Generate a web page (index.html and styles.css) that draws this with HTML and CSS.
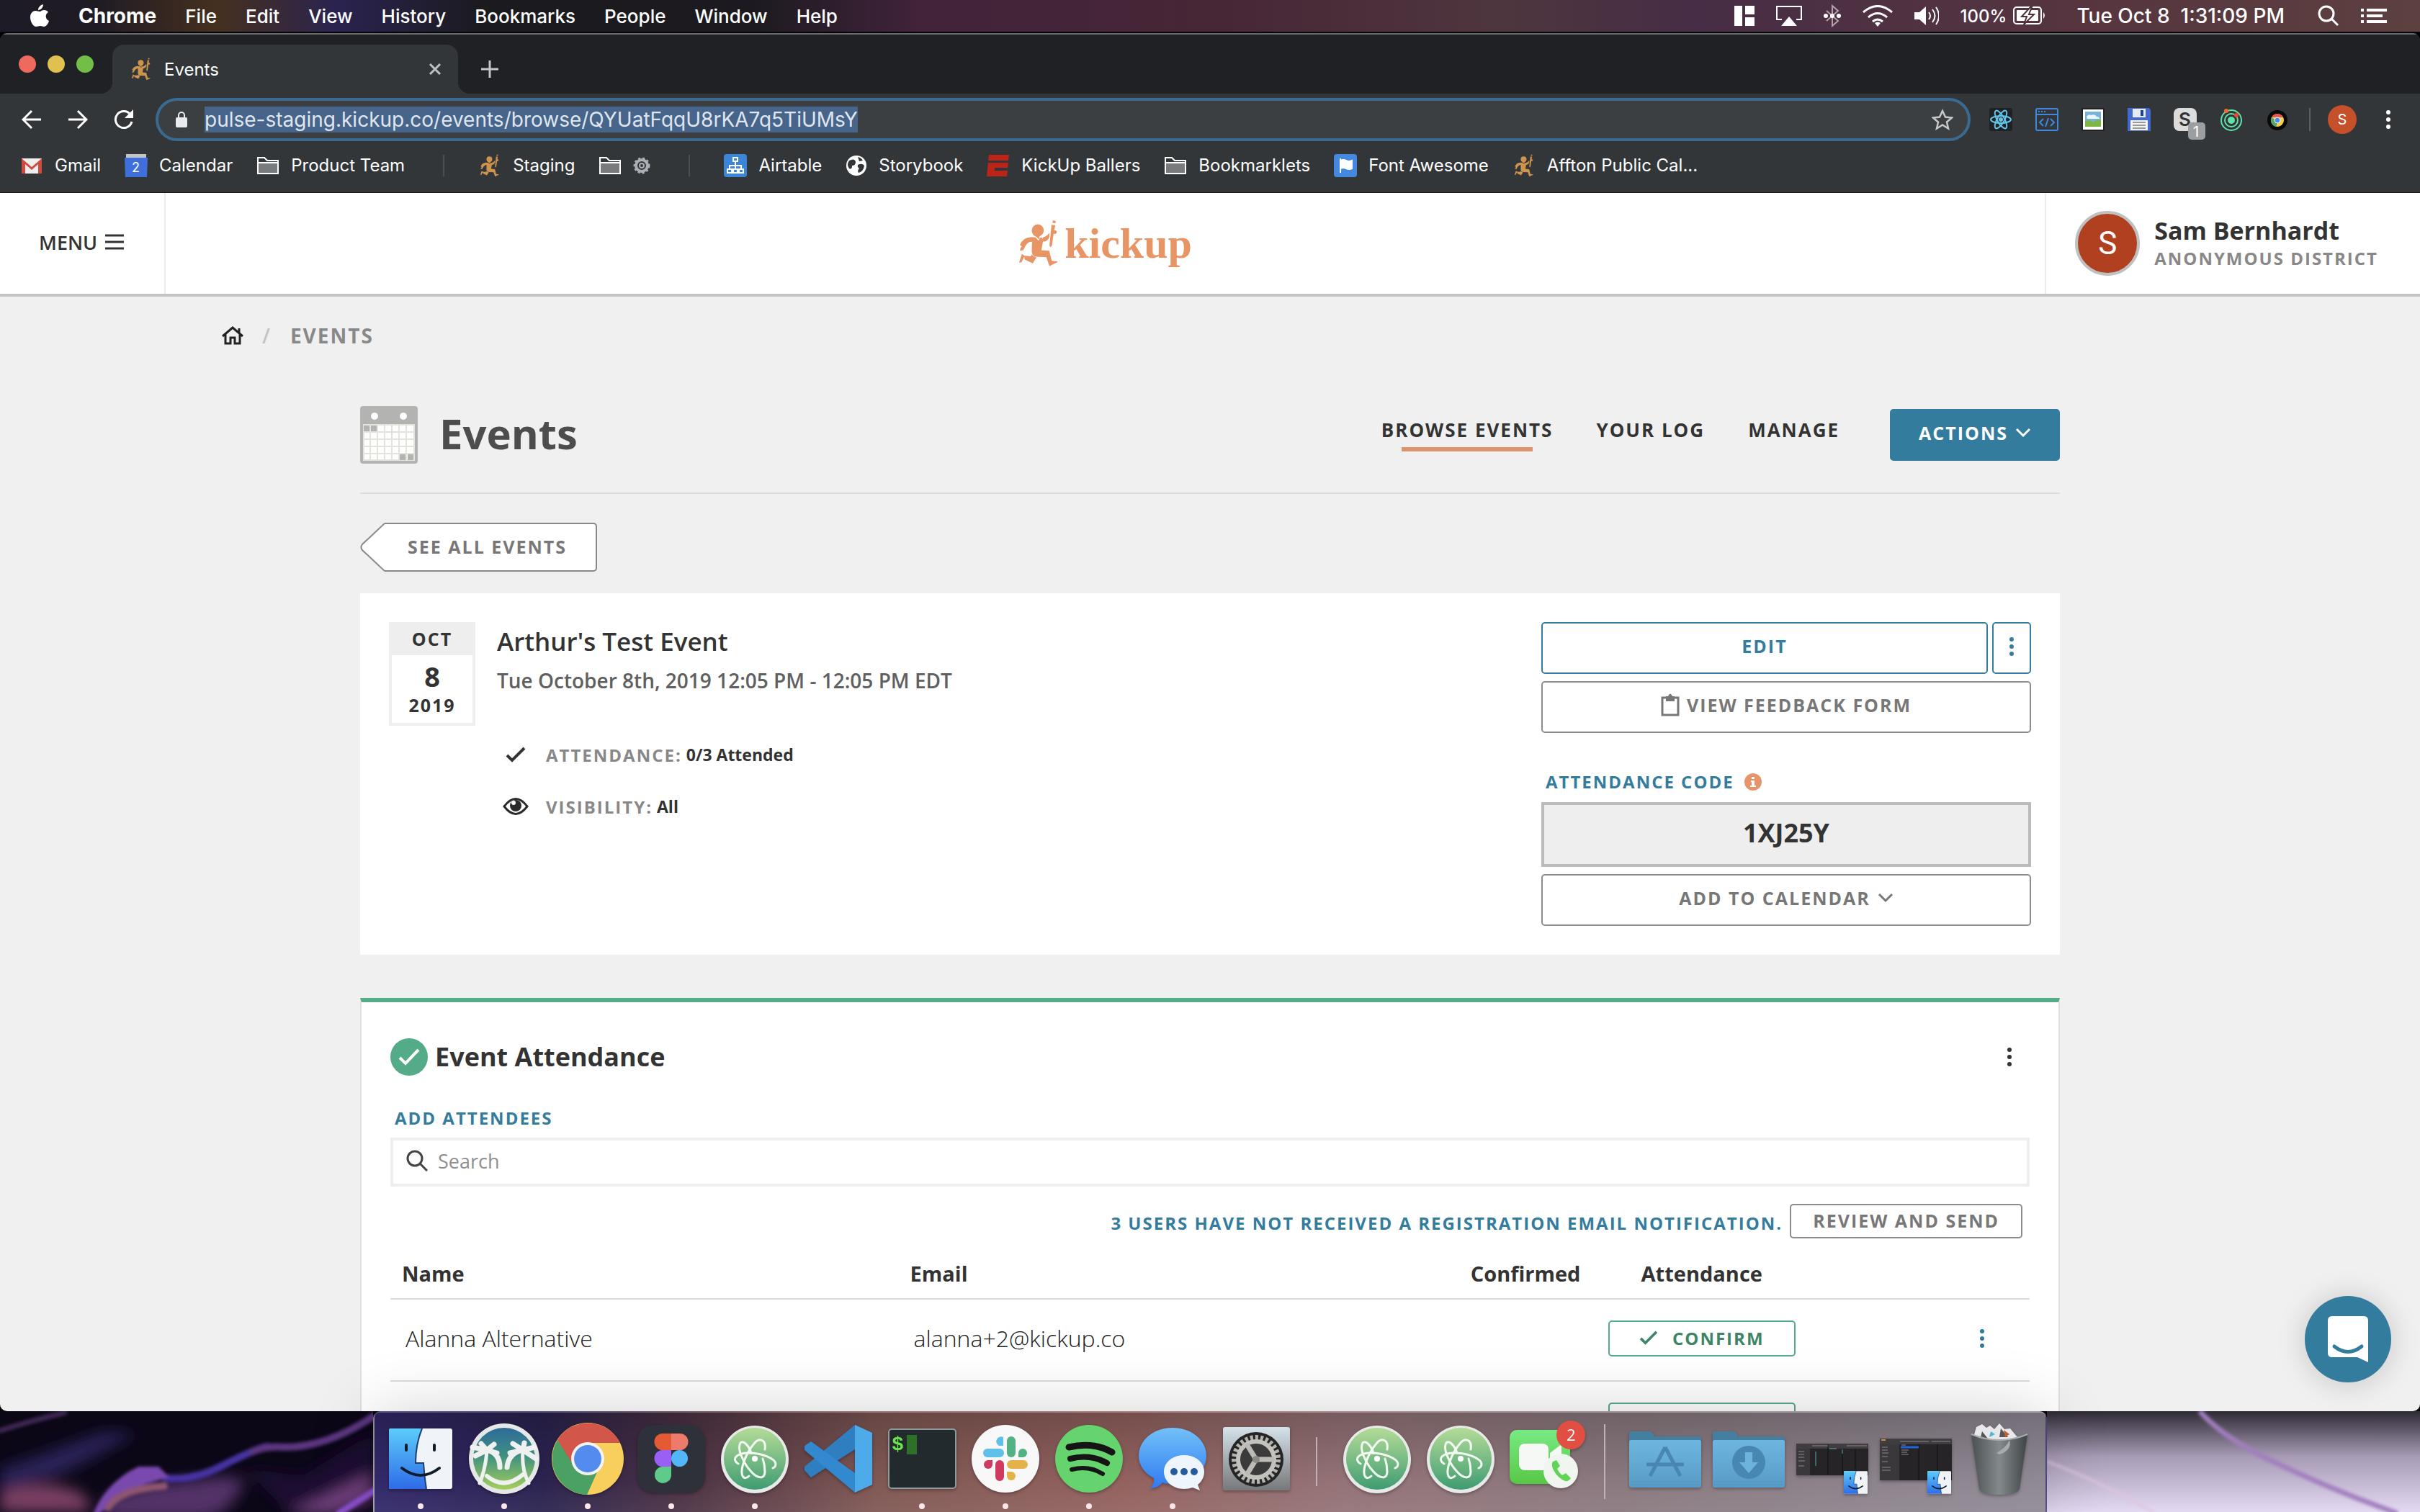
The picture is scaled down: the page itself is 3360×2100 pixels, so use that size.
FILE: index.html
```html
<!DOCTYPE html>
<html lang="en">
<head>
<meta charset="utf-8">
<title>Events</title>
<meta name="viewport" content="width=device-width, initial-scale=1">
<link rel="stylesheet" href="styles.css">
</head>
<body>
<svg class="sprite" aria-hidden="true">
  <symbol id="runner" viewBox="46 48 170 202">
    <path d="M127 68a26 26 0 0 1 26 26c0 14-10 22-18 25l-3 14-9-11c-12-4-21-14-21-28a26 26 0 0 1 25-26zM118 124l14 14 4-12 10-2 4 14-7 40 33 2 11 43 25 3q-2 7-12 8l-23 12-13-38-44-2q-16-2-18-20l1-44q-17 0-27 16l-10 20-14 2 2-12 6-5-8-7q10-32 48-34zM150 124q12-2 22-14l5-6v18q-7 16-23 20l-8-4zM186 70l16 2-6 28-8 58-6 8-5-8zM192 52l12 1-1 10-13-1zM60 194l12 8 26 2 4-8q6 10 20 13l-16 25-34-16-2-12-12 24-10 0z"/>
    <circle cx="200" cy="101" r="8"/>
  </symbol>
  <symbol id="folder" viewBox="0 0 32 28">
    <path d="M2 25V3h9l4 4h15v18z" fill="none" stroke="#fff" stroke-width="2"/>
    <path d="M3 11h26v13H3z" fill="#777b7e"/><path d="M2 10h28" stroke="#fff" stroke-width="2"/>
  </symbol>
  <symbol id="check" viewBox="0 0 28 22"><path d="M2 12l7 7L26 2" fill="none" stroke="currentColor" stroke-width="4"/></symbol>
  <symbol id="chevron" viewBox="0 0 22 14"><path d="M2 2l9 9 9-9" fill="none" stroke="currentColor" stroke-width="3"/></symbol>
  <symbol id="kebab" viewBox="0 0 8 28"><circle cx="4" cy="4" r="3" fill="currentColor"/><circle cx="4" cy="14" r="3" fill="currentColor"/><circle cx="4" cy="24" r="3" fill="currentColor"/></symbol>
  <symbol id="atom" viewBox="0 0 100 100">
    <circle cx="50" cy="51" r="47" fill="#e8eaea"/><circle cx="50" cy="50" r="43" fill="url(#atomFill)"/>
    <g fill="none" stroke="#f2faf2" stroke-width="3" stroke-linecap="round">
      <path d="M64 37c2-14-8-17-15-8-12 14-20 37-16 45 2 4 6 3 9 0"/>
      <path d="M27 57c-10-6-3-15 14-15 20 0 37 8 38 15 0 2-1 5-4 6"/>
      <path d="M45 42c-4-12-12-18-15-14-5 8 4 28 15 40 9 10 19 11 19 0 0-6-1-12-3-18"/>
    </g>
    <circle cx="50" cy="50" r="4" fill="#fff"/>
  </symbol>
  <symbol id="finder" viewBox="0 0 88 84">
    <rect width="88" height="84" rx="3" fill="#f0f4f9"/>
    <path d="M3 0h43q-9 22-9 48h11q1 18 4 36H3q-3 0-3-3V3q0-3 3-3z" fill="url(#finderFill)"/>
    <path d="M46 0q-9 22-9 48h11q1 18 4 36" fill="none" stroke="#1d3f6d" stroke-width="2"/>
    <path d="M24 23v7M63 23v7M18 55q26 20 52 0" fill="none" stroke="#101c2c" stroke-width="4" stroke-linecap="round"/>
  </symbol>
  <defs>
    <linearGradient id="atomFill" x2="0" y2="1"><stop stop-color="#b4db97"/><stop offset="1" stop-color="#3f9c72"/></linearGradient>
    <linearGradient id="finderFill" x2="0" y2="1"><stop stop-color="#5ccdfa"/><stop offset="1" stop-color="#2e6be8"/></linearGradient>
    <linearGradient id="palmFill" x2="0" y2="1"><stop stop-color="#2d6b98"/><stop offset=".45" stop-color="#3f8f82"/><stop offset="1" stop-color="#a5cf5a"/></linearGradient>
    <linearGradient id="msgFill" x2="0" y2="1"><stop stop-color="#72c1f8"/><stop offset="1" stop-color="#2f7bf2"/></linearGradient>
    <linearGradient id="prefFill" x2="0" y2="1"><stop stop-color="#d4e2ea"/><stop offset="1" stop-color="#77787a"/></linearGradient>
    <linearGradient id="faceFill" x2="0" y2="1"><stop stop-color="#78ea83"/><stop offset="1" stop-color="#57c845"/></linearGradient>
    <linearGradient id="folderFill" x2="0" y2="1"><stop stop-color="#6db6e0"/><stop offset="1" stop-color="#579bc6"/></linearGradient>
    <linearGradient id="binFill"><stop stop-color="#4b5153"/><stop offset=".5" stop-color="#84898b"/><stop offset="1" stop-color="#3e4446"/></linearGradient>
    <filter id="soft" x="-20%" y="-20%" width="140%" height="140%"><feGaussianBlur stdDeviation="10"/></filter>
    <filter id="soft2" x="-20%" y="-20%" width="140%" height="140%"><feGaussianBlur stdDeviation="2"/></filter>
  </defs>
</svg>

<div class="desktop">
  <header class="menubar">
    <nav class="menus" aria-label="Menu bar">
      <svg width="28" height="32" viewBox="0 0 28 32" fill="#fff"><path d="M19 0c0 4-3 8-7 8 0-4 3-7 7-8zM14 10c2 0 3-2 6-2 3 0 5 1 6 3-5 3-4 10 1 12-1 4-4 8-7 8-2 0-3-1-5-1s-4 1-6 1C5 31 1 24 1 18c0-6 4-9 7-9 3 0 4 1 6 1z"/></svg>
      <b>Chrome</b><span>File</span><span>Edit</span><span>View</span><span>History</span><span>Bookmarks</span><span>People</span><span>Window</span><span>Help</span>
    </nav>
    <div class="extras">
      <svg width="28" height="28" fill="#fff"><path d="M0 0h11v28H0zM15 0h13v12H15zM15 16h13v12H15z"/></svg>
      <svg width="36" height="28"><path d="M8 19H1V1h34v18h-7" fill="none" stroke="#fff" stroke-width="2"/><path d="M18 15l11 13H7z" fill="#fff"/></svg>
      <svg width="24" height="32" fill="none" stroke="#b4a3ab" stroke-width="2"><path d="M4 9l16 14-8 7V2l8 7L4 23"/><g fill="#fff" stroke="none"><circle cx="3" cy="16" r="3"/><circle cx="12" cy="16" r="3"/><circle cx="21" cy="16" r="3"/></g></svg>
      <svg width="42" height="30" fill="none" stroke="#fff" stroke-width="3"><path d="M1 10q20-17 40 0M8 17q13-11 26 0M14 23q7-6 14 0"/><path d="M21 30l-4-5q4-3 8 0z" fill="#fff" stroke="none"/></svg>
      <svg width="34" height="26"><path d="M0 8h7l9-8v26l-9-8H0z" fill="#fff"/><path d="M20 8q4 5 0 10M25 4q7 9 0 18M30 1q8 12 0 24" fill="none" stroke="#fff" stroke-width="2"/></svg>
      <span class="battery">100% <svg width="46" height="26"><rect x="1" y="1" width="38" height="23" rx="4" fill="none" stroke="#fff" stroke-width="2"/><rect x="5" y="5" width="30" height="15" rx="1" fill="#fff"/><path d="M42 8q4 4 0 9z" fill="#fff"/><path d="M24 1L12 14h7l-4 11 14-14h-7l4-10z" fill="#fff" stroke="#4b303b" stroke-width="2"/></svg></span>
      <time>Tue Oct 8&nbsp; 1:31:09 PM</time>
      <svg width="30" height="30" fill="none" stroke="#fff" stroke-width="3"><circle cx="12" cy="12" r="10"/><path d="M19 19l9 9"/></svg>
      <svg width="36" height="20" fill="#fff"><path d="M0 0h4v4H0zM8 0h28v4H8zM0 8h4v4H0zM8 8h22v4H8zM0 16h4v4H0zM8 16h28v4H8z"/></svg>
    </div>
  </header>

  <section class="window">
    <div class="tabstrip">
      <div class="lights"><i class="red"></i><i class="yellow"></i><i class="green"></i></div>
      <div class="tab">
        <svg class="runner-icon" width="28" height="32"><use href="#runner"/></svg>
        <span class="tab-title">Events</span>
        <button class="bare" aria-label="Close tab"><svg width="18" height="18" stroke="#bfc1c3" stroke-width="3"><path d="M2 2l14 14M16 2L2 16"/></svg></button>
      </div>
      <button class="bare new-tab" aria-label="New tab"><svg width="24" height="24" stroke="#c4c6c8" stroke-width="3"><path d="M12 0v24M0 12h24"/></svg></button>
    </div>

    <div class="toolbar">
      <button class="bare tool" aria-label="Back"><svg width="28" height="28" fill="none" stroke="#fff" stroke-width="3"><path d="M27 14H3M14 2L2 14l12 12"/></svg></button>
      <button class="bare tool" aria-label="Forward"><svg width="28" height="28" fill="none" stroke="#fff" stroke-width="3"><path d="M1 14h24M14 2l12 12-12 12"/></svg></button>
      <button class="bare tool" aria-label="Reload"><svg width="28" height="28"><path d="M23 7A11.500 11.500 0 1 0 25 17" fill="none" stroke="#fff" stroke-width="3"/><path d="M27 0v12H15z" fill="#fff"/></svg></button>
      <label class="omnibox">
        <svg width="16" height="22"><rect y="8" width="16" height="14" rx="2" fill="#e8eaed"/><path d="M4 9V5a4 4 0 0 1 8 0v4" fill="none" stroke="#e8eaed" stroke-width="2"/></svg>
        <input class="url" type="text" aria-label="Address" value="pulse-staging.kickup.co/events/browse/QYUatFqqU8rKA7q5TiUMsY" spellcheck="false">
        <svg width="30" height="30" fill="none" stroke="#c5c7c9" stroke-width="2.500"><path d="M15 3l4 8.500 9 1-7 6 2 9-8-5-8 5 2-9-7-6 9-1z"/></svg>
      </label>
      <div class="extensions">
        <span class="tool"><svg width="32" height="32"><rect width="32" height="32" rx="3" fill="#202124"/><g fill="none" stroke="#61c8ec" stroke-width="2"><ellipse cx="16" cy="16" rx="14" ry="5"/><ellipse cx="16" cy="16" rx="14" ry="5" transform="rotate(60 16 16)"/><ellipse cx="16" cy="16" rx="14" ry="5" transform="rotate(120 16 16)"/></g><circle cx="16" cy="16" r="3" fill="#61c8ec"/></svg></span>
        <span class="tool"><svg width="32" height="32" fill="none" stroke="#3f87e0" stroke-width="2"><rect x="1" y="1" width="30" height="30" rx="2"/><path d="M1 9h30M4 5h2M8 5h2M12 5h2M11 15l-5 5 5 5M21 15l5 5-5 5M18 14l-4 12"/></svg></span>
        <span class="tool"><svg width="32" height="32"><rect width="32" height="32" fill="#222"/><rect x="2" y="2" width="28" height="28" fill="#fff"/><rect x="5" y="5" width="22" height="21" fill="#75b4d8"/><path d="M7 12q3-4 6-2 6-2 8 2 4 0 4 3H8z" fill="#eef6fb"/><path d="M5 18q8-2 11 2 6-5 11-3v9H5z" fill="#7fb541"/></svg></span>
        <span class="tool"><svg width="32" height="32"><path d="M0 0h30l2 3v29H0z" fill="#4169d0"/><path d="M7 1h18v12H7z" fill="#e6ebf5"/><path d="M18 3h4v8h-4z" fill="#1f3f9c"/><path d="M4 17h24v14H4z" fill="#f3f3f3"/><path d="M7 20h18M7 24h18M7 28h18" stroke="#999" stroke-width="2"/></svg></span>
        <span class="tool"><svg class="overflow" width="32" height="32"><rect width="32" height="32" rx="8" fill="#dcdcdc"/><text x="7" y="25" font-size="26" font-weight="600" fill="#333">S</text><rect x="20" y="20" width="24" height="24" rx="5" fill="#9c9fa1"/><text x="27" y="40" font-size="20" fill="#fff">1</text></svg></span>
        <span class="tool"><svg width="32" height="32" fill="none" stroke="#5fe3a8" stroke-width="2"><circle cx="16" cy="17" r="14"/><circle cx="16" cy="17" r="9"/><circle cx="16" cy="17" r="4" fill="#5fe3a8"/><circle cx="9" cy="4" r="3" fill="#f06a2c" stroke="none"/><circle cx="23" cy="10" r="3" fill="#f0452c" stroke="none"/></svg></span>
        <span class="tool"><svg width="32" height="32"><circle cx="16" cy="17" r="14" fill="#090909"/><circle cx="16" cy="17" r="9" fill="#f7d04b"/><path d="M8 13a9 9 0 0 1 16 0H16z" fill="#df5a4b"/><path d="M8 13a9 9 0 0 0 6 13l3-7z" fill="#4fa868"/><circle cx="16" cy="17" r="4" fill="#4d8af0" stroke="#fff"/></svg></span>
      </div>
      <i class="tool-rule"></i>
      <span class="tool"><span class="mini-avatar">S</span></span>
      <button class="bare tool" aria-label="Chrome menu"><svg width="8" height="28" color="#fff"><use href="#kebab"/></svg></button>
    </div>

    <nav class="bookmarks" aria-label="Bookmarks">
      <a href="#"><svg width="32" height="32"><path d="M2 6h28v21H2z" fill="#eee"/><path d="M2 27V6l14 12L30 6v21h-5V14l-9 8-9-8v13z" fill="#d04a3b"/></svg>Gmail</a>
      <a href="#"><svg width="32" height="32"><path d="M2 0h28v6H2z" fill="#c3c4c6"/><path d="M0 5h32l-1 27H1z" fill="#3f6fdd"/><text x="10" y="25" font-size="18" fill="#fff">2</text></svg>Calendar</a>
      <a href="#"><svg width="32" height="28"><use href="#folder"/></svg>Product Team</a>
      <i class="bm-rule"></i>
      <a href="#"><svg class="runner-icon" width="32" height="32"><use href="#runner"/></svg>Staging</a>
      <a href="#" aria-label="Settings folder"><svg width="32" height="28"><use href="#folder"/></svg><svg width="24" height="24" fill="none"><circle cx="12" cy="12" r="8" stroke="#aab0b5" stroke-width="4"/><circle cx="12" cy="12" r="10" stroke="#aab0b5" stroke-width="3" stroke-dasharray="3 3"/><circle cx="12" cy="12" r="3" stroke="#aab0b5" stroke-width="2"/></svg></a>
      <i class="bm-rule"></i>
      <a href="#"><svg width="32" height="32"><rect width="32" height="32" rx="4" fill="#3b86d8"/><g fill="none" stroke="#fff" stroke-width="2"><path d="M13 5h6v5h-6zM16 10v10M8 21v-5h16v5M5 21h6v5H5zM13 21h6v5h-6zM21 21h6v5h-6z"/></g></svg>Airtable</a>
      <a href="#"><svg width="30" height="30"><circle cx="15" cy="15" r="14" fill="#fff"/><path d="M5 8q8-4 9 2 0 5-5 5 0 6-4 4-4-5 0-11zM17 14q6-3 9 1-1 8-8 10-2-3 1-6-3-2-2-5zM17 3q5 1 7 5l-5 1z" fill="#323639"/></svg>Storybook</a>
      <a href="#"><svg width="32" height="32" fill="#bd2418"><path d="M3 1h28l-1 8H2zM2 12h28l-1 7H11v4h18l-1 8H0z"/></svg>KickUp Ballers</a>
      <a href="#"><svg width="32" height="28"><use href="#folder"/></svg>Bookmarklets</a>
      <a href="#"><svg width="32" height="32"><rect width="32" height="32" rx="4" fill="#4489df"/><path d="M9 26V6M9 9q4-2 8 0t8 0v11q-4 2-8 0t-8 0z" fill="#fff" stroke="#fff" stroke-width="2"/></svg>Font Awesome</a>
      <a href="#"><svg class="runner-icon" width="32" height="32"><use href="#runner"/></svg>Affton Public Cal...</a>
    </nav>

    <div class="page">
      <header class="app-header">
        <button class="bare menu-btn">MENU <svg width="26" height="22" stroke="#333" stroke-width="3"><path d="M0 2h26M0 11h26M0 20h26"/></svg></button>
        <a class="logo" href="#"><svg width="56" height="66"><use href="#runner"/></svg>kickup</a>
        <div class="user">
          <span class="avatar">S</span>
          <div><div class="user-name">Sam Bernhardt</div><div class="label muted">Anonymous District</div></div>
        </div>
      </header>

      <nav class="breadcrumb" aria-label="Breadcrumb">
        <a href="#" aria-label="Home"><svg width="30" height="26" fill="none" stroke="#222" stroke-width="3"><path d="M1 14L15 2l14 12M5 11v13h7v-8h6v8h7V11M24 3v6"/></svg></a>
        <span class="slash">/</span><a class="crumb" href="#">EVENTS</a>
      </nav>

      <main class="content">
        <header class="page-head">
          <svg width="80" height="80"><rect width="80" height="80" rx="4" fill="#b3b3b1"/><path d="M4 25h72v51H4z" fill="#fff"/><path d="M4 26h72M4 36h72M4 46h72M4 56h72M4 66h72M4 75h72M5 25v51M14 25v51M24 25v51M34 25v51M44 25v51M54 25v51M64 25v51M75 25v51" stroke="#e3e3dc" stroke-width="2"/><path d="M5 27h8v8H5zM15 27h8v8h-8zM55 67h8v8h-8zM66 67h8v8h-8z" fill="#b3b3b1"/><circle cx="20" cy="14" r="5" fill="#fff"/><circle cx="60" cy="14" r="5" fill="#fff"/></svg>
          <h1>Events</h1>
          <nav class="subnav" aria-label="Events">
            <a class="current" href="#">Browse Events</a><a href="#">Your Log</a><a href="#">Manage</a>
          </nav>
          <button class="btn primary">Actions <svg width="22" height="14"><use href="#chevron"/></svg></button>
        </header>

        <a class="back" href="#"><svg width="34" height="68"><path d="M34 1L3 30q-3 4 0 8l31 29" fill="#fff" stroke="#888" stroke-width="2"/></svg><span>See all events</span></a>

        <section class="event">
          <div class="date"><div class="month">OCT</div><div class="day">8</div><div class="year">2019</div></div>
          <div class="event-info">
            <h2>Arthur's Test Event</h2>
            <p class="when">Tue October 8th, 2019 12:05 PM - 12:05 PM EDT</p>
            <dl>
              <div><svg width="28" height="22"><use href="#check"/></svg><dt class="label muted">Attendance:</dt><dd>0/3 Attended</dd></div>
              <div><svg width="36" height="24"><path d="M2 12q16-21 32 0-16 21-32 0z" fill="#fff" stroke="#2b2b2b" stroke-width="3"/><circle cx="18" cy="11" r="8" fill="#2b2b2b"/><circle cx="15" cy="7" r="3" fill="#fff"/></svg><dt class="label muted">Visibility:</dt><dd>All</dd></div>
            </dl>
          </div>
          <div class="event-actions">
            <div class="split"><button class="btn blue">Edit</button><button class="btn blue more" aria-label="More actions"><svg width="8" height="28"><use href="#kebab"/></svg></button></div>
            <button class="btn">
              <svg width="26" height="32"><path d="M2 6h22v24H2z" fill="none" stroke="currentColor" stroke-width="3"/><path d="M7 4h3q3-7 6 0h3v7H7z" fill="currentColor"/></svg>
              View Feedback Form</button>
            <div class="code-label label">Attendance Code <svg width="24" height="24"><circle cx="12" cy="12" r="12" fill="#e8946a"/><path d="M9 10h5v7h2v2H8v-2h2v-5H9zM10 5h4v3h-4z" fill="#fff"/></svg></div>
            <output class="code">1XJ25Y</output>
            <button class="btn">Add to Calendar <svg width="22" height="14"><use href="#chevron"/></svg></button>
          </div>
        </section>

        <section class="attendance">
          <header class="att-head">
            <svg width="52" height="52"><circle cx="26" cy="26" r="26" fill="#54ab88"/><path d="M13 27l8 8 18-19" fill="none" stroke="#fff" stroke-width="4"/></svg>
            <h2>Event Attendance</h2>
            <button class="bare att-more" aria-label="More"><svg width="8" height="28"><use href="#kebab"/></svg></button>
          </header>
          <label class="label search-label" for="attendee">Add Attendees</label>
          <div class="search">
            <svg width="30" height="30" fill="none" stroke="#444" stroke-width="3"><circle cx="12" cy="12" r="10"/><path d="M19 19l10 10"/></svg>
            <input id="attendee" type="text" placeholder="Search">
          </div>
          <div class="notice"><span class="label">3 users have not received a registration email notification.</span><button class="btn small">Review and Send</button></div>
          <table>
            <colgroup><col class="c-name"><col class="c-email"><col class="c-conf"><col class="c-att"><col class="c-more"></colgroup>
            <thead><tr><th>Name</th><th>Email</th><th class="mid">Confirmed</th><th class="mid">Attendance</th><th></th></tr></thead>
            <tbody>
              <tr><td>Alanna Alternative</td><td>alanna+2@kickup.co</td><td></td><td class="mid"><button class="btn confirm"><svg width="26" height="20"><use href="#check"/></svg>Confirm</button></td><td class="row-more"><button class="bare" aria-label="Row actions"><svg width="8" height="28"><use href="#kebab"/></svg></button></td></tr>
              <tr><td></td><td></td><td></td><td class="mid"><button class="btn confirm" aria-label="Confirm"><svg width="26" height="20"><use href="#check"/></svg></button></td><td></td></tr>
            </tbody>
          </table>
        </section>
      </main>
      <button class="bare messenger" aria-label="Open chat"><svg width="56" height="64"><path d="M6 0h44q6 0 6 6v58l-15-7H6q-6 0-6-6V6q0-6 6-6z" fill="#fff"/><path d="M9 42q19 15 38 0" fill="none" stroke="#337c9e" stroke-width="5" stroke-linecap="round"/></svg></button>
    </div>
  </section>

  <footer class="shelf">
    <svg class="wall" viewBox="0 0 518 140" preserveAspectRatio="xMidYMid slice">
      <rect width="518" height="140" fill="#0b0717"/>
      <g filter="url(#soft)"><path d="M0 80Q60 60 140 30L190 30Q120 70 80 90L0 110z" fill="#2c2059"/><path d="M0 112q60-20 110 0 20 14 12 28H0z" fill="#7c3f63"/><path d="M150 118l60-16 100-12 30 6q-20 50-60 54H140z" fill="#523267"/><path d="M340 80l80 10 98-60v110H400z" fill="#1d1130"/><path d="M400 142L518 85v30l-60 30z" fill="#70417c"/></g>
      <g filter="url(#soft2)" fill="none" stroke-linecap="round"><path d="M0 27Q40 14 90 2" stroke="#3f2752" stroke-width="7"/><path d="M230 93q40 4 80-18 45-23 62-26" stroke="#4430a0" stroke-width="10"/><path d="M350 56q20-8 45-6 60 0 125-44" stroke="#5b3680" stroke-width="10"/><path d="M133 142q14-34 48-56l12-6 26 0 10 10-40 12z" stroke="#7a4aae" fill="#7a4aae" stroke-width="6"/><path d="M150 134q16-26 78-30" stroke="#8d5570" stroke-width="10"/><path d="M470 142l55-35" stroke="#8a50cc" stroke-width="9"/></g>
    </svg>
    <div class="dock">
      <span class="app on"><svg width="88" height="84"><use href="#finder"/></svg></span>
      <span class="app on"><svg viewBox="0 0 100 100"><circle cx="50" cy="50" r="49" fill="#e6e8e8"/><circle cx="50" cy="50" r="43" fill="url(#palmFill)"/><g fill="none" stroke="#eef1ef" stroke-linecap="round"><path d="M26 40q-2 24-10 44M76 40q-2 24 8 44" stroke-width="5"/><path d="M26 38L10 46M26 38L6 34M26 38l-8-9M26 38l10-8M26 38l14 4M26 38q18 4 18 24M76 38q-20 4-22 24M76 38l-18 4M76 38l-14-9M76 38l2-10M76 38l16-4M76 38l18 12" stroke-width="7"/><path d="M26 74q24 20 50-2" stroke-width="6"/></g></svg></span>
      <span class="app on"><svg viewBox="0 0 100 100"><circle cx="50" cy="50" r="50" fill="#f8ce5c"/><path d="M8 24A50 50 0 0 1 95 28H50L28 60z" fill="#d2564a"/><path d="M8 24A50 50 0 0 0 49 100L66 62 28 56z" fill="#4ba063"/><path d="M30 38L8 24q10-16 24-20z" fill="#d2564a"/><circle cx="50" cy="50" r="23" fill="#f4f4f4"/><circle cx="50" cy="50" r="19" fill="#548bee"/></svg></span>
      <span class="app on"><svg viewBox="0 0 100 100"><rect x="3" y="3" width="94" height="94" rx="22" fill="#2e303a"/><path d="M38 15h12v23H38a11.500 11.500 0 0 1 0-23z" fill="#e45a35"/><path d="M50 15h12a11.500 11.500 0 0 1 0 23H50z" fill="#ee7a6b"/><path d="M38 38h12v23H38a11.500 11.500 0 0 1 0-23z" fill="#9a60f6"/><circle cx="61.500" cy="49.500" r="11.500" fill="#52b7f8"/><path d="M38 61h12v12a11.500 11.500 0 1 1-12-12z" fill="#5ecb8a"/></svg></span>
      <span class="app on"><svg viewBox="0 0 100 100"><use href="#atom"/></svg></span>
      <span class="app"><svg viewBox="0 0 100 100"><path d="M73 3v34L12 76 3 66v-5z" fill="#2f7fc0"/><path d="M12 26L73 70v27L3 38v-6z" fill="#3289cf"/><path d="M73 3l24 11v72L73 97z" fill="#4dabea"/></svg></span>
      <span class="app on"><svg viewBox="0 0 100 100"><rect x="4" y="9" width="93" height="82" rx="4" fill="#222a2d" stroke="#8d9b9d" stroke-width="2"/><text class="mono" x="8" y="38" font-size="28" fill="#6be34e">$</text><rect x="29" y="17" width="14" height="27" fill="#2f7028"/></svg></span>
      <span class="app on"><svg viewBox="0 0 100 100"><circle cx="50" cy="50" r="47" fill="#f8f8f8"/><g><path d="M47 20v12h-6a6 6 0 1 1 6-12z" fill="#5fc1e9"/><rect x="19" y="36" width="29" height="12" rx="6" fill="#5fc1e9"/><rect x="52" y="19" width="12" height="29" rx="6" fill="#54b183"/><path d="M68 48V42a6 6 0 1 1 6 6z" fill="#54b183"/><rect x="52" y="52" width="29" height="12" rx="6" fill="#e5b249"/><path d="M52 68h6a6 6 0 1 1-6 6z" fill="#e5b249"/><rect x="36" y="52" width="12" height="29" rx="6" fill="#d03a60"/><path d="M32 52v6a6 6 0 1 1-6-6z" fill="#d03a60"/></g></svg></span>
      <span class="app on"><svg viewBox="0 0 100 100"><circle cx="50" cy="50" r="47" fill="#65d36e"/><g fill="none" stroke="#151515" stroke-linecap="round"><path d="M22 34q34-8 60 7" stroke-width="9"/><path d="M24 50q28-7 51 6" stroke-width="8"/><path d="M26 65q24-6 43 6" stroke-width="6"/></g></svg></span>
      <span class="app on"><svg viewBox="0 0 100 100"><path d="M50 7c26 0 47 17 47 39S76 85 50 85c-5 0-10 0-14-2-4 5-10 8-17 8 5-5 6-10 5-14C11 70 3 59 3 46 3 24 24 7 50 7z" fill="url(#msgFill)"/><path d="M66 45c16 0 28 10 28 23 0 8-4 14-9 18l3 8-10-4c-4 1-8 2-12 2-16 0-28-11-28-24s12-23 28-23z" fill="#eef5fc"/><circle cx="52" cy="68" r="5" fill="#245b9e"/><circle cx="66" cy="68" r="5" fill="#245b9e"/><circle cx="80" cy="68" r="5" fill="#245b9e"/></svg></span>
      <span class="app"><svg viewBox="0 0 100 100"><rect x="4" y="6" width="93" height="88" rx="3" fill="url(#prefFill)"/><circle cx="50" cy="51" r="38" fill="#252525"/><circle cx="50" cy="51" r="30" fill="none" stroke="#b5b3b0" stroke-width="8" stroke-dasharray="4 3"/><circle cx="50" cy="51" r="25" fill="#3b3b3b" stroke="#c4c2be" stroke-width="6"/><path d="M50 51h25M50 51L37 30M50 51L37 72" stroke="#bdbab6" stroke-width="7"/><circle cx="50" cy="51" r="5" fill="#8a8a88"/></svg></span>
      <i class="dock-rule short"></i>
      <span class="app"><svg viewBox="0 0 100 100"><use href="#atom"/></svg></span>
      <span class="app"><svg viewBox="0 0 100 100"><use href="#atom"/></svg></span>
      <span class="app"><svg class="overflow" viewBox="0 0 100 100"><rect x="2" y="10" width="84" height="75" rx="10" fill="url(#faceFill)"/><rect x="15" y="29" width="41" height="37" rx="8" fill="#f6f8f6"/><path d="M58 42l16-12v36L58 54z" fill="#f6f8f6"/><circle cx="73" cy="67" r="24" fill="#f1f5f0"/><path d="M62 54q-3 4 1 12 6 11 16 15 5 1 8-4l-7-7-5 3q-5-4-7-9l4-4-5-8z" fill="#5fd455"/><circle cx="87" cy="17" r="20" fill="#e04f42"/><text x="81" y="25" font-size="22" fill="#fff">2</text></svg></span>
      <i class="dock-rule"></i>
      <span class="app"><svg viewBox="0 0 100 100"><path d="M0 16q0-4 4-4h24q4 0 7 7h61q4 0 4 4v10H0z" fill="#457f9f"/><rect y="24" width="100" height="66" rx="3" fill="url(#folderFill)"/><g stroke="#4787b2" stroke-width="5" fill="none"><path d="M50 34L29 74M50 34l21 40M24 58h52"/></g><path d="M2 82h96M2 86h96" stroke="#5496be"/></svg></span>
      <span class="app"><svg viewBox="0 0 100 100"><path d="M0 16q0-4 4-4h24q4 0 7 7h61q4 0 4 4v10H0z" fill="#457f9f"/><rect y="24" width="100" height="66" rx="3" fill="url(#folderFill)"/><circle cx="50" cy="55" r="23" fill="#4787b2"/><path d="M45 41h10v14h8L50 70 37 55h8z" fill="#6db4dd"/><path d="M2 82h96M2 86h96" stroke="#5496be"/></svg></span>
      <span class="app"><svg viewBox="0 0 100 100"><rect y="29" width="100" height="44" fill="#262427"/><rect y="29" width="100" height="7" fill="#403d41"/><rect y="36" width="19" height="37" fill="#3b383c"/><path d="M44 30v42M64 36v36M82 36v36" stroke="#111"/><path d="M27 40v20M46 36h10M64 37v6" stroke="#5fa5b8"/><path d="M3 40h8M3 44h8M3 48h8M3 53h9M3 60h8M22 32h22M70 32h28" stroke="#8b878c"/><svg x="66" y="67" width="33" height="32"><use href="#finder"/></svg></svg></span>
      <span class="app"><svg viewBox="0 0 100 100"><rect y="22" width="100" height="58" fill="#262427"/><rect y="22" width="100" height="8" fill="#403d41"/><rect y="30" width="27" height="50" fill="#3b383c"/><path d="M54 30v50M80 30v50" stroke="#111"/><path d="M29 34h25" stroke="#1d64dd" stroke-width="3"/><path d="M30 31h6M30 38h10M30 41h8M30 44h10M3 34h8M3 38h8M3 42h9M3 47h8M3 54h8M3 62h12M3 66h12M28 26h40M72 26h26" stroke="#8b878c"/><path d="M2 24h6" stroke="#cf8a3c" stroke-width="2"/><svg x="66" y="67" width="33" height="32"><use href="#finder"/></svg></svg></span>
      <span class="app"><svg viewBox="0 0 100 100"><path d="M14 20L18 6l8-4 6 5 5-3 6 5 7-8 7 8 8-1 10 12-2 6H14z" fill="#e8e8ea"/><path d="M26 12l8 10-10-2zM52 8l10 12H50z" fill="#555"/><path d="M38 12l6 4-8 4z" fill="#4fb4d2"/><path d="M56 10l8 6-6 4z" fill="#c35b2f"/><path d="M11 16q39 16 78 0L78 92q-3 8-28 8T22 92z" fill="url(#binFill)"/><path d="M11 16q39 16 78 0" fill="none" stroke="#a9adae" stroke-width="2"/><path d="M46 42q14-8 18-18 4 14-14 20z" fill="#a8abac"/></svg></span>
    </div>
    <svg class="wall" viewBox="0 0 518 140" preserveAspectRatio="xMidYMid slice">
      <defs><linearGradient id="wallR" x2="0" y2="1"><stop stop-color="#2e2a35"/><stop offset=".45" stop-color="#a79bb5"/><stop offset="1" stop-color="#e3d9f2"/></linearGradient></defs>
      <rect width="518" height="140" fill="url(#wallR)"/>
      <g filter="url(#soft2)" fill="none"><path d="M212 0q30 34 90 64 90 44 185 78" stroke="#a27fbe" stroke-width="7"/><path d="M0 70q80 30 150 72" stroke="#dfc4e0" stroke-width="3"/></g>
    </svg>
  </footer>
</div>
<script src="app.js"></script>
</body>
</html>
```
FILE: styles.css
```css
* { box-sizing: border-box; }

body {
  margin: 0;
  background: #000;
  color: #333;
  font-family: "Open Sans", sans-serif;
  font-size: 28px;
}

h1, h2, p, dl, dd { margin: 0; }
svg { display: block; flex: none; }
a { color: inherit; text-decoration: none; }
button, input { font: inherit; color: inherit; margin: 0; }
button { cursor: pointer; }

.sprite { position: absolute; width: 0; height: 0; }
.overflow { overflow: visible; }
.mono { font-family: "Liberation Mono", monospace; font-weight: 700; }
.bare { background: none; border: 0; padding: 0; display: flex; align-items: center; justify-content: center; }

.desktop { height: 100vh; display: flex; flex-direction: column; }

/* macOS menu bar */
.menubar {
  height: 46px;
  flex: none;
  display: flex;
  justify-content: space-between;
  align-items: center;
  padding: 0 46px 0 41px;
  border-bottom: 2px solid #050408;
  background: linear-gradient(90deg, #1d1b26 0%, #1f1b24 4%, #45301f 9%, #2a2350 14%, #1b1a1e 20%, #1c1a20 31%, #41233a 38%, #472636 50%, #4e363e 62%, #472d45 70%, #56353f 86%, #5d4040 100%);
  color: #fff;
  font-family: Inter, sans-serif;
  font-size: 26px;
  font-weight: 500;
}
.menus, .extras { display: flex; align-items: center; }
.menus { gap: 40px; }
.menus b { font-size: 28px; }
.extras { gap: 30px; }
.battery { display: flex; align-items: center; gap: 9px; font-size: 24px; }
.extras time { margin: 0 16px 0 12px; font-size: 28px; }

/* Chrome window */
.window {
  flex: 1;
  min-height: 0;
  display: flex;
  flex-direction: column;
  overflow: hidden;
  border-radius: 10px;
  background: #323639;
  color: #fff;
  font-family: Inter, sans-serif;
}
.tabstrip {
  height: 84px;
  flex: none;
  display: flex;
  align-items: flex-end;
  background: #202124;
  border-top: 2px solid #6a6c6e;
}
.lights { display: flex; gap: 16px; width: 156px; padding: 0 0 29px 26px; }
.lights i { width: 24px; height: 24px; border-radius: 50%; }
.red { background: #ee6a5f; }
.yellow { background: #e0c04e; }
.green { background: #72be47; }
.tab {
  position: relative;
  width: 480px;
  height: 68px;
  display: flex;
  align-items: center;
  gap: 18px;
  padding: 0 23px 0 26px;
  border-radius: 16px 16px 0 0;
  background: #323639;
  font-size: 24px;
}
.tab::before, .tab::after { content: ""; position: absolute; bottom: 0; width: 16px; height: 16px; }
.tab::before { left: -16px; background: radial-gradient(circle at 0 0, transparent 16px, #323639 16px); }
.tab::after { right: -16px; background: radial-gradient(circle at 100% 0, transparent 16px, #323639 16px); }
.tab-title { flex: 1; }
.new-tab { height: 68px; margin-left: 32px; }
.runner-icon { fill: #cf944c; }

.toolbar { height: 72px; flex: none; display: flex; align-items: center; padding: 0 12px; }
.tool { width: 64px; height: 64px; flex: none; display: flex; align-items: center; justify-content: center; }
.omnibox {
  flex: 1;
  height: 60px;
  margin: 0 10px 0 12px;
  display: flex;
  align-items: center;
  gap: 24px;
  padding: 0 20px 0 24px;
  border: 4px solid #3a6a8f;
  border-radius: 30px;
  background: #3c3f42;
}
.url {
  flex: 1;
  min-width: 0;
  height: 36px;
  padding: 0;
  border: 0;
  outline: 0;
  background: none;
  color: #e8eaed;
  font-size: 28px;
  line-height: 36px;
}
.url::selection { background: #47648a; color: #dfe6f0; }
.extensions { display: flex; }
.tool-rule { width: 2px; height: 32px; margin: 0 12px; background: #5e6164; }
.mini-avatar {
  width: 40px;
  height: 40px;
  border-radius: 50%;
  background: #c5502a;
  font-size: 20px;
  line-height: 40px;
  text-align: center;
}

.bookmarks {
  height: 66px;
  flex: none;
  display: flex;
  align-items: center;
  gap: 33px;
  padding: 0 26px 10px 28px;
  border-bottom: 1px solid #1c1a1c;
  font-size: 24px;
  white-space: nowrap;
}
.bookmarks a { display: flex; align-items: center; gap: 16px; }
.bm-rule { width: 2px; height: 30px; margin: 0 14px 0 20px; background: #4a4e51; }

/* Web page */
.page {
  position: relative;
  flex: 1;
  min-height: 0;
  overflow: hidden;
  background: #f0f0f0;
  color: #333;
  font-family: "Open Sans", sans-serif;
}
.label { font-size: 24px; font-weight: 700; letter-spacing: 2px; text-transform: uppercase; }
.muted { color: #888; }

.app-header { display: flex; height: 144px; background: #fff; border-bottom: 4px solid #c4c4c4; }
.menu-btn { width: 230px; padding: 0 56px 4px 54px; justify-content: space-between; border-right: 2px solid #ececec; font-weight: 600; font-size: 27px; }
.logo {
  flex: 1;
  display: flex;
  align-items: center;
  justify-content: center;
  gap: 8px;
  color: #e89566;
  fill: #e89566;
  font: 700 60px/66px "Liberation Serif", serif;
}
.user { display: flex; align-items: center; gap: 20px; padding: 0 58px 0 40px; border-left: 2px solid #ececec; }
.avatar {
  width: 90px;
  height: 90px;
  border: 4px solid #c0c0c0;
  border-radius: 50%;
  background: #b04020;
  color: #fff;
  font: 44px/82px Roboto, sans-serif;
  text-align: center;
}
.user-name { font-size: 34px; font-weight: 700; line-height: 44px; }
.user .label { padding-bottom: 4px; }

.breadcrumb {
  max-width: 2744px;
  height: 108px;
  margin: 0 auto;
  display: flex;
  align-items: center;
  gap: 26px;
  color: #888;
  font-weight: 600;
  letter-spacing: 2px;
}
.crumb { font-weight: 700; }
.slash { color: #c4c4c4; }

.content { max-width: 2360px; margin: 0 auto; }
.page-head {
  display: flex;
  align-items: center;
  padding: 44px 0 40px;
  border-bottom: 2px solid #dcdcdc;
}
h1 { flex: 1; padding: 0 0 4px 30px; color: #4d4d4d; font-size: 58px; font-weight: 700; line-height: 76px; }
.subnav { display: flex; gap: 60px; margin-right: 70px; font-size: 26px; font-weight: 700; letter-spacing: 2px; line-height: 32px; text-transform: uppercase; }
.subnav a::after { content: ""; display: block; width: 76%; height: 6px; margin: 8px auto 0; }
.subnav .current::after { background: #da936b; }

.btn {
  height: 72px;
  display: flex;
  align-items: center;
  justify-content: center;
  gap: 10px;
  padding: 0 38px 6px;
  border: 2px solid #8c8c8c;
  border-radius: 5px;
  background: #fff;
  color: #777;
  font-size: 25px;
  font-weight: 700;
  letter-spacing: 2px;
  text-transform: uppercase;
}
.btn.blue { border-color: #337c9e; color: #337c9e; }
.btn.primary { border-color: #337c9e; background: #337c9e; color: #fff; }

.back { display: inline-flex; margin: 40px 0 30px; color: #777; font-size: 25px; font-weight: 700; letter-spacing: 2px; text-transform: uppercase; vertical-align: top; }
.back span { height: 68px; padding: 0 40px 0 32px; border: 2px solid #888; border-left: 0; border-radius: 0 5px 5px 0; background: #fff; line-height: 62px; }

.event { display: flex; gap: 30px; padding: 40px; background: #fff; }
.date { width: 120px; height: 144px; border: 4px solid #eee; text-align: center; font-size: 25px; font-weight: 700; }
.month { height: 42px; background: #eee; letter-spacing: 2px; line-height: 38px; }
.day { padding-top: 6px; font-size: 38px; line-height: 46px; }
.year { letter-spacing: 2px; line-height: 34px; }
.event-info { flex: 1; padding-top: 4px; }
.event-info h2 { font-size: 35px; font-weight: 600; line-height: 46px; }
.when { padding-top: 12px; color: #606060; font-weight: 600; line-height: 38px; }
dl { padding: 48px 0 0 8px; }
dl div { display: flex; align-items: center; height: 72px; }
dl svg { margin: 0 4px; }
dl svg + dt { margin-left: 24px; }
dl div:last-child svg { margin: 0; }
dd { padding-left: 6px; font-size: 23px; font-weight: 700; }
.event-actions { width: 680px; display: flex; flex-direction: column; gap: 10px; }
.split { display: flex; gap: 6px; }
.split .btn { flex: 1; }
.split .more { flex: 0 0 54px; padding: 0 0 4px; }
.code-label { display: flex; align-items: center; gap: 14px; margin-top: 40px; padding-left: 6px; color: #337c9e; line-height: 36px; }
.code { height: 90px; border: 4px solid #bbb; background: #eee; font-size: 36px; font-weight: 700; line-height: 78px; text-align: center; }

.attendance { margin-top: 60px; padding: 50px 40px; border: 2px solid #e0e0e0; border-top: 6px solid #54ab88; background: #fff; }
.att-head { display: flex; align-items: center; gap: 10px; }
.att-head h2 { flex: 1; font-size: 36px; font-weight: 700; line-height: 52px; }
.att-more { width: 56px; height: 52px; }
.search-label { display: block; padding: 42px 0 10px 6px; color: #337c9e; line-height: 34px; }
.search { display: flex; align-items: center; gap: 14px; height: 68px; padding: 0 0 4px 18px; border: 4px solid #eee; }
.search input { flex: 1; height: 54px; padding: 0; border: 0; outline: 0; background: none; font-size: 27px; }
.search input::placeholder { color: #8f8f8f; opacity: 1; }
.notice { display: flex; align-items: center; justify-content: flex-end; gap: 10px; padding: 24px 10px 14px 0; color: #337c9e; }
.notice .label { padding-top: 4px; }
.btn.small { height: 48px; padding: 0 30px 2px; }

table { width: 100%; border-collapse: collapse; table-layout: fixed; }
.c-name { width: 31%; }
.c-email { width: 33.500%; }
.c-conf { width: 9.500%; }
.c-att { width: 12%; }
.c-more { width: 14%; }
th { height: 70px; padding: 0 0 0 16px; text-align: left; font-size: 29px; font-weight: 700; border-bottom: 2px solid #dcdcdc; }
td { height: 114px; padding: 0 0 6px 21px; color: #222; font-size: 32px; font-weight: 300; border-bottom: 2px solid #dcdcdc; }
th.mid { padding: 0; text-align: center; }
td.mid, td.row-more { padding: 0 0 4px; }
.btn.confirm { width: 260px; height: 50px; margin: 0 auto; gap: 20px; padding: 0 0 2px; border-color: #54ab88; color: #3d8565; font-size: 24px; }
.row-more button { width: 64px; height: 64px; margin: 0 34px 0 auto; color: #337c9e; }

.messenger {
  position: absolute;
  right: 40px;
  bottom: 40px;
  width: 120px;
  height: 120px;
  border-radius: 50%;
  background: #337c9e;
  box-shadow: 0 2px 40px rgba(0, 0, 0, 0.18);
}

/* Dock and wallpaper */
.shelf { height: 140px; flex: none; display: flex; }
.wall { flex: 1 1 0; min-width: 0; height: 140px; }
.dock {
  position: relative;
  display: flex;
  gap: 16px;
  padding: 14px 14px 0;
  border: 2px solid rgba(255, 255, 255, 0.14);
  border-bottom: 0;
  border-radius: 10px 10px 0 0;
  background:
    linear-gradient(rgba(0, 0, 0, 0.2), transparent 70%, rgba(255, 255, 255, 0.06)),
    linear-gradient(90deg, #32296a 0%, #2b2350 10%, #4a3144 18%, #805854 30%, #93625f 45%, #947377 58%, #8a7a80 75%, #908a96 100%);
  box-shadow: 0 0 90px rgba(0, 0, 0, 0.18);
}
.app { position: relative; width: 100px; height: 100px; display: flex; align-items: center; justify-content: center; }
.app > svg { max-width: 100%; filter: drop-shadow(0 2px 2px rgba(0, 0, 0, 0.3)); }
.app > svg:not([width]) { width: 100px; height: 100px; }
.app.on::after { content: ""; position: absolute; left: 46px; top: 112px; width: 8px; height: 8px; border-radius: 50%; background: #fbe6ea; }
.dock-rule { width: 36px; height: 104px; margin-top: 2px; background: linear-gradient(#bfb2b5, #bfb2b5) center / 2px 100% no-repeat; }
.dock-rule.short { height: 68px; margin-top: 20px; }
```
FILE: app.js
```js
// The address bar opens focused with its URL selected.
const url = document.querySelector('.url');
url.focus();
url.select();
```
